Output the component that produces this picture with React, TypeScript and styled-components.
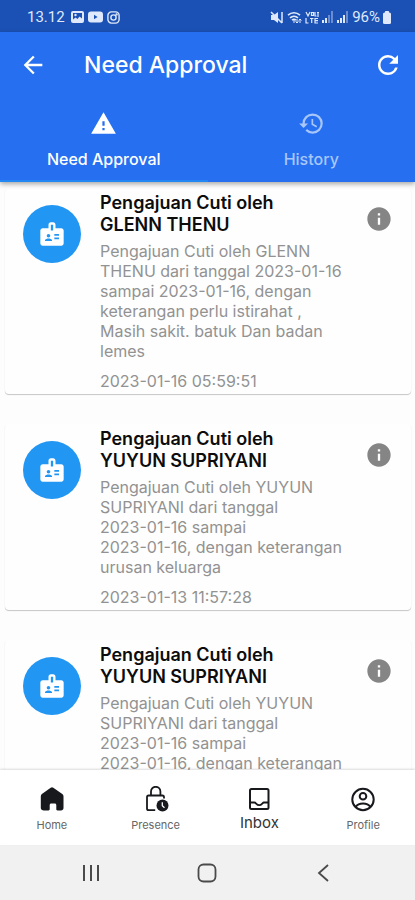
import React from "react";
import styled, { createGlobalStyle } from "styled-components";
import { MdArrowBack, MdBadge, MdHistory, MdInfo, MdRefresh, MdWarning } from "react-icons/md";

const GlobalStyle = createGlobalStyle`
  * { box-sizing: border-box; }
  body { margin: 0; background: #fdfdfd; font-family: Inter, "Liberation Sans", sans-serif; font-optical-sizing: none; }
  button { border: 0; padding: 0; background: none; font: inherit; font-optical-sizing: none; color: inherit; cursor: pointer; }
  h1, h2, p { margin: 0; }
`;

const Screen = styled.div`
  height: 100vh;
  display: flex;
  flex-direction: column;
  overflow: hidden;
`;

const StatusBar = styled.div`
  flex: none;
  height: 32px;
  padding: 2px 24px 0 27px;
  display: flex;
  align-items: center;
  justify-content: space-between;
  background: #1b51b5;
  color: #dfe9fb;
  font: 400 15px/20px Roboto, sans-serif;
`;

const StatusGroup = styled.div<{ $gap: number }>`
  display: flex;
  align-items: center;
  gap: ${(p) => p.$gap}px;
`;

const Header = styled.header`
  flex: none;
  position: relative;
  z-index: 1;
  background: #256ff0;
  color: #fff;
  box-shadow: 0 2px 5px rgba(0, 0, 0, 0.35);
`;

const TopBar = styled.div`
  height: 65px;
  padding: 0 12px 0 19px;
  display: flex;
  align-items: center;
`;

const IconButton = styled.button`
  display: flex;
  flex: none;
`;

const Title = styled.h1`
  flex: 1;
  margin-left: 37px;
  font-size: 23px;
  line-height: 28px;
  font-weight: 500;
`;

const Tabs = styled.div`
  display: grid;
  grid-template-columns: 1fr 1fr;
`;

const Tab = styled.button<{ $active?: boolean }>`
  height: 85px;
  padding-top: 13px;
  display: flex;
  flex-direction: column;
  align-items: center;
  gap: 12px;
  font-size: 16px;
  line-height: 20px;
  font-weight: 500;
  color: ${(p) => (p.$active ? "#fff" : "#a9c6fa")};
  border-bottom: 2px solid ${(p) => (p.$active ? "#2187f3" : "#256ff0")};
`;

const List = styled.main`
  flex: 1;
  min-height: 0;
  overflow-y: auto;
  scrollbar-width: none;
  padding: 6px 4px 30px 5px;
  display: flex;
  flex-direction: column;
  gap: 30px;
`;

const Card = styled.article`
  flex: none;
  padding: 4px 18px 3px;
  display: grid;
  grid-template-columns: 58px 1fr 28px;
  column-gap: 19px;
  align-items: start;
  background: #fefefe;
  border-radius: 4px;
  box-shadow: 0 1px 1px rgba(0, 0, 0, 0.22);
`;

const Avatar = styled.div`
  margin-top: 13px;
  height: 58px;
  border-radius: 50%;
  display: grid;
  place-items: center;
  background: #2196f3;
  color: #fff;
`;

const CardTitle = styled.h2`
  font-size: 18px;
  line-height: 22px;
  font-weight: 600;
  color: #0c0c0c;
  white-space: pre-line;
`;

const CardText = styled.p`
  margin-top: 5px;
  font-size: 16px;
  line-height: 20px;
  color: #929292;
  white-space: pre-line;
`;

const CardDate = styled(CardText)`
  margin-top: 10px;
`;

const InfoButton = styled(IconButton)`
  margin-top: 13px;
  color: #858585;
`;

const BottomNav = styled.nav`
  flex: none;
  height: 75px;
  padding-top: 16px;
  display: grid;
  grid-template-columns: repeat(4, 1fr);
  background: #fff;
  box-shadow: 0 -1px 2px rgba(0, 0, 0, 0.14);
  position: relative;
`;

const NavItem = styled.button<{ $active?: boolean }>`
  display: flex;
  flex-direction: column;
  align-items: center;
  justify-content: flex-start;
  gap: ${(p) => (p.$active ? 2 : 6)}px;
  font-size: ${(p) => (p.$active ? 15 : 11)}px;
  line-height: ${(p) => (p.$active ? 18 : 14)}px;
  color: ${(p) => (p.$active ? "#333" : "#666")};
  svg { color: #17191d; }
`;

const SystemNav = styled.div`
  flex: none;
  height: 55px;
  padding: 0 33px;
  display: grid;
  grid-template-columns: repeat(3, 1fr);
  place-items: center;
  background: #f1f1f1;
  color: #4a4a4a;
`;

const PictureIcon = () => (
  <svg width="13" height="12" viewBox="0 0 13 12" aria-hidden="true">
    <rect width="13" height="12" rx="2" fill="currentColor" />
    <path d="M2 2h9v5.500l-2.500-2-2 2.500-2-1.500L2 8.500z" fill="#1b51b5" />
    <circle cx="4.500" cy="4" r="1.200" fill="currentColor" />
  </svg>
);

const VideoIcon = () => (
  <svg width="15" height="12" viewBox="0 0 15 12" aria-hidden="true">
    <rect y="0.500" width="15" height="11" rx="3" fill="currentColor" />
    <path d="M6 3.800v4.400L9.600 6z" fill="#1b51b5" />
  </svg>
);

const CameraIcon = () => (
  <svg width="13" height="13" viewBox="0 0 13 13" fill="none" stroke="currentColor" strokeWidth="1.400" aria-hidden="true">
    <rect x="0.900" y="0.900" width="11.200" height="11.200" rx="3.500" />
    <circle cx="6.500" cy="6.500" r="2.600" />
    <circle cx="9.600" cy="3.400" r="0.500" />
  </svg>
);

const MuteIcon = () => (
  <svg width="14" height="13" viewBox="0 0 14 13" aria-hidden="true">
    <path d="M1 4h3l4-3v11L4 9H1z" fill="currentColor" />
    <path d="M1 1l11 11M12 1v11" stroke="currentColor" strokeWidth="1.500" />
  </svg>
);

const WifiIcon = () => (
  <svg width="15" height="13" viewBox="0 0 15 13" fill="none" stroke="currentColor" strokeWidth="1.600" aria-hidden="true">
    <path d="M1 4.200C4.500 1 9.500 1 13 4.200M3 6.800c2.300-2 5.700-2 8 0M5 9.200c1.200-1 2.800-1 4 0" />
    <path d="M7 12V9M10 8v4M8.500 10.500l1.500 1.500 1.500-1.500M13 12V8M11.700 9.500L13 8l1.500 1.500" strokeWidth="1" />
  </svg>
);

const VolteIcon = () => (
  <svg width="14" height="13" viewBox="0 0 14 13" fill="none" stroke="currentColor" strokeWidth="1.200" aria-hidden="true">
    <path d="M1 1l2 4 2-4M6.500 1.500h2v3h-2zM10 1v4h1.500M12 1.500h2M13 1.500V6M1 7v5h2.500M5 7.500h3.500M6.700 7.500V12M13 7.500h-3V12h3M10 9.700h3" />
  </svg>
);

const SignalIcon = ({ level }: { level: number }) => (
  <svg width="12" height="12" viewBox="0 0 12 12" fill="currentColor" aria-hidden="true">
    {[3, 5, 8, 12].map((h, i) => (
      <rect key={h} x={i * 3} y={12 - h} width="2" height={h} opacity={i < level ? 1 : 0.4} />
    ))}
  </svg>
);

const BatteryIcon = () => (
  <svg width="8" height="13" viewBox="0 0 8 13" fill="currentColor" aria-hidden="true">
    <rect x="2" width="4" height="3" rx="0.500" />
    <rect y="1.500" width="8" height="11.500" rx="1.500" />
  </svg>
);

const HomeIcon = () => (
  <svg width="26" height="26" viewBox="0 0 26 26" fill="currentColor" aria-hidden="true">
    <path d="M11.700 1.800a2 2 0 0 1 2.600 0l9 6.300c.7.600 1.200 1.400 1.200 2.300V22c0 1.500-1 2.500-2.500 2.500h-3.500c-.8 0-1.200-.5-1.200-1.200v-4.100c0-1-.6-1.700-1.600-1.700h-3.400c-1 0-1.600.7-1.600 1.700v4.100c0 .7-.5 1.200-1.200 1.200H5C3 24.500 1.800 23.500 1.800 22V10.400c0-.9.400-1.700 1.100-2.300z" />
  </svg>
);

const LockClockIcon = () => (
  <svg width="26" height="26" viewBox="0 0 26 26" fill="none" stroke="currentColor" strokeWidth="1.800" aria-hidden="true">
    <path d="M21 12.500v-1.300c0-.9-.7-1.700-1.600-1.700H5.600c-.9 0-1.600.8-1.600 1.700v11.300c0 .9.700 1.700 1.600 1.700h6.600M8 9.500V5.500a4.700 4.700 0 0 1 9.400 0v4" />
    <circle cx="19.500" cy="19.500" r="6" fill="currentColor" stroke="none" />
    <path d="M19.300 16.200v3.500l2.200 2" stroke="#fff" strokeWidth="1.300" />
  </svg>
);

const InboxIcon = () => (
  <svg width="26" height="26" viewBox="0 0 26 26" fill="none" stroke="currentColor" strokeWidth="2" aria-hidden="true">
    <rect x="4" y="3" width="18.500" height="20" rx="1.500" />
    <path d="M4 16.500h4.500c1.500 0 2 2.700 4.700 2.700s3.200-2.700 4.700-2.700h4.600" strokeWidth="1.800" />
  </svg>
);

const ProfileIcon = () => (
  <svg width="26" height="26" viewBox="0 0 26 26" fill="none" stroke="currentColor" strokeWidth="2" aria-hidden="true">
    <circle cx="13" cy="13.500" r="10.700" />
    <circle cx="13" cy="10.300" r="3.300" />
    <path d="M5.500 20.800c1.700-2.400 4.300-3.400 7.500-3.400s5.800 1 7.500 3.400" />
  </svg>
);

const requests = [
  {
    title: "Pengajuan Cuti oleh\nGLENN THENU",
    text: "Pengajuan Cuti oleh GLENN THENU dari tanggal 2023-01-16\nsampai 2023-01-16, dengan keterangan perlu istirahat ,\nMasih sakit. batuk Dan badan lemes",
    date: "2023-01-16 05:59:51",
  },
  {
    title: "Pengajuan Cuti oleh\nYUYUN SUPRIYANI",
    text: "Pengajuan Cuti oleh YUYUN SUPRIYANI dari tanggal\n2023-01-16 sampai\n2023-01-16, dengan keterangan urusan keluarga",
    date: "2023-01-13 11:57:28",
  },
  {
    title: "Pengajuan Cuti oleh\nYUYUN SUPRIYANI",
    text: "Pengajuan Cuti oleh YUYUN SUPRIYANI dari tanggal\n2023-01-16 sampai\n2023-01-16, dengan keterangan",
    date: "",
  },
];

export default function App() {
  return (
    <Screen>
      <GlobalStyle />
      <StatusBar>
        <StatusGroup $gap={6}>
          <span>13.12</span>
          <StatusGroup $gap={4}>
            <PictureIcon />
            <VideoIcon />
            <CameraIcon />
          </StatusGroup>
        </StatusGroup>
        <StatusGroup $gap={3}>
          <MuteIcon />
          <WifiIcon />
          <VolteIcon />
          <SignalIcon level={2} />
          <SignalIcon level={3} />
          <span>96%</span>
          <BatteryIcon />
        </StatusGroup>
      </StatusBar>
      <Header>
        <TopBar>
          <IconButton aria-label="Back"><MdArrowBack size={28} /></IconButton>
          <Title>Need Approval</Title>
          <IconButton aria-label="Refresh"><MdRefresh size={30} /></IconButton>
        </TopBar>
        <Tabs role="tablist">
          <Tab role="tab" aria-selected="true" $active>
            <MdWarning size={27} />
            Need Approval
          </Tab>
          <Tab role="tab" aria-selected="false">
            <MdHistory size={27} />
            History
          </Tab>
        </Tabs>
      </Header>
      <List>
        {requests.map((r, i) => (
          <Card key={i}>
            <Avatar><MdBadge size={28} /></Avatar>
            <div>
              <CardTitle>{r.title}</CardTitle>
              <CardText>{r.text}</CardText>
              {r.date && <CardDate>{r.date}</CardDate>}
            </div>
            <InfoButton aria-label="Info"><MdInfo size={28} /></InfoButton>
          </Card>
        ))}
      </List>
      <BottomNav>
        <NavItem><HomeIcon />Home</NavItem>
        <NavItem><LockClockIcon />Presence</NavItem>
        <NavItem $active><InboxIcon />Inbox</NavItem>
        <NavItem><ProfileIcon />Profile</NavItem>
      </BottomNav>
      <SystemNav>
        <IconButton aria-label="Recent apps">
          <svg width="20" height="20" viewBox="0 0 20 20" stroke="currentColor" strokeWidth="2">
            <path d="M3 2v16M10 2v16M17 2v16" />
          </svg>
        </IconButton>
        <IconButton aria-label="Home screen">
          <svg width="20" height="20" viewBox="0 0 20 20" fill="none" stroke="currentColor" strokeWidth="1.800">
            <rect x="1.500" y="1.500" width="17" height="17" rx="5" />
          </svg>
        </IconButton>
        <IconButton aria-label="Go back">
          <svg width="20" height="20" viewBox="0 0 20 20" fill="none" stroke="currentColor" strokeWidth="1.800">
            <path d="M14 2l-9 8 9 8" />
          </svg>
        </IconButton>
      </SystemNav>
    </Screen>
  );
}
